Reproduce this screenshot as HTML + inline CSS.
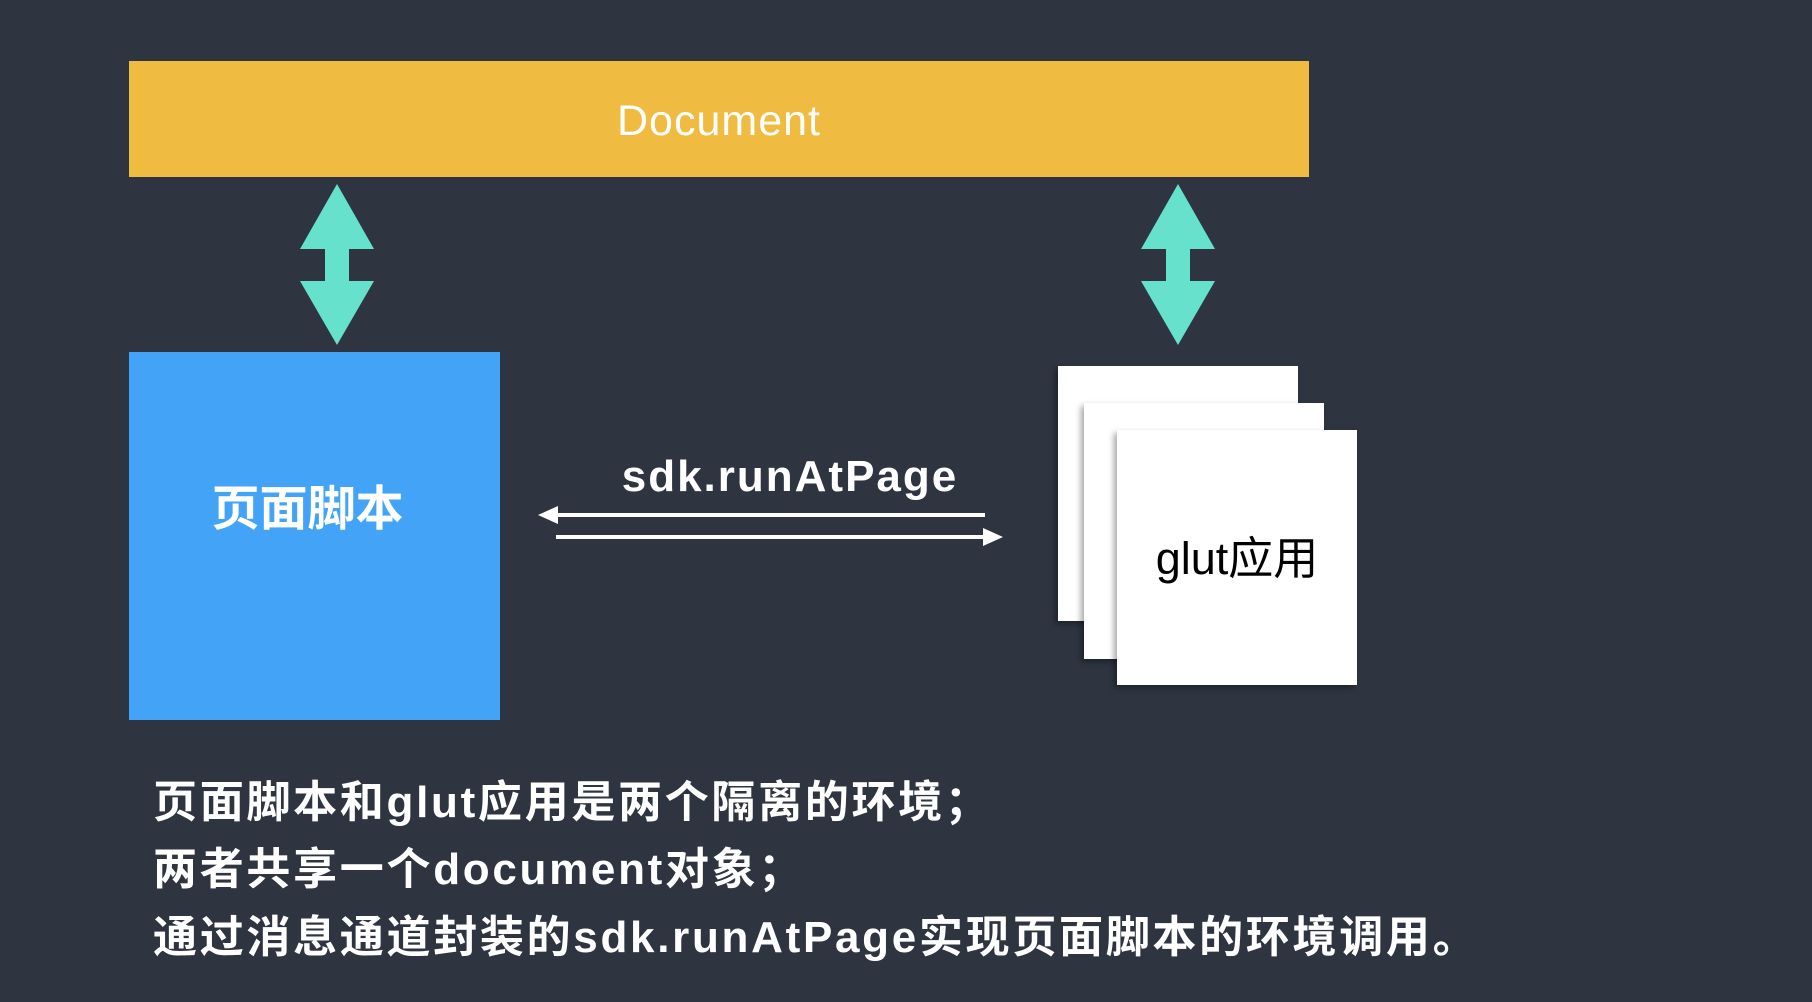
<!DOCTYPE html>
<html><head><meta charset="utf-8"><style>
body{margin:0;width:1812px;height:1002px;background:#2e3541;overflow:hidden;position:relative;font-family:"Liberation Sans","Noto Sans CJK SC",sans-serif}
.a{position:absolute}
.card{position:absolute;background:#fff;box-shadow:-3px 3px 6px rgba(0,0,0,.35)}
.t{position:absolute;left:153px;color:#fff;font-size:44px;font-weight:bold;white-space:nowrap;line-height:1;letter-spacing:2.7px}
</style></head><body>
<div class="a" style="left:129px;top:61px;width:1180px;height:116px;background:#efbb41;color:#fff;font-size:43px;letter-spacing:1px;display:flex;align-items:center;justify-content:center;padding-top:4px;box-sizing:border-box">Document</div>
<svg class="a" style="left:0;top:0" width="1812" height="1002">
<polygon fill="#66e1cc" points="337,184 374,249 349,249 349,281 374,281 337,345 300,281 325,281 325,249 300,249"/>
<polygon fill="#66e1cc" points="1178,184 1215,249 1190,249 1190,281 1215,281 1178,345 1141,281 1166,281 1166,249 1141,249"/>
<rect x="552" y="513" width="433" height="4" fill="#fff"/>
<polygon fill="#fff" points="538,515 558,506 558,524"/>
<rect x="556" y="535" width="430" height="4" fill="#fff"/>
<polygon fill="#fff" points="1003,537 983,528 983,546"/>
</svg>
<div class="a" style="left:129px;top:352px;width:371px;height:368px;background:#43a3f7;color:#fff;font-size:48px;font-weight:bold;display:flex;align-items:center;justify-content:center;padding-bottom:64px;padding-right:14px;box-sizing:border-box">页面脚本</div>
<div class="a" style="left:540px;top:452px;width:500px;text-align:center;color:#fff;font-size:44px;letter-spacing:2px;font-weight:bold">sdk.runAtPage</div>
<div class="card" style="left:1058px;top:366px;width:240px;height:255px"></div>
<div class="card" style="left:1084px;top:403px;width:240px;height:256px"></div>
<div class="card" style="left:1117px;top:430px;width:240px;height:255px;display:flex;align-items:center;justify-content:center;font-size:45px;color:#000;padding-bottom:6px;box-sizing:border-box">glut应用</div>
<div class="t" style="top:781px">页面脚本和glut应用是两个隔离的环境；</div>
<div class="t" style="top:848px">两者共享一个document对象；</div>
<div class="t" style="top:916px">通过消息通道封装的sdk.runAtPage实现页面脚本的环境调用。</div>
</body></html>
